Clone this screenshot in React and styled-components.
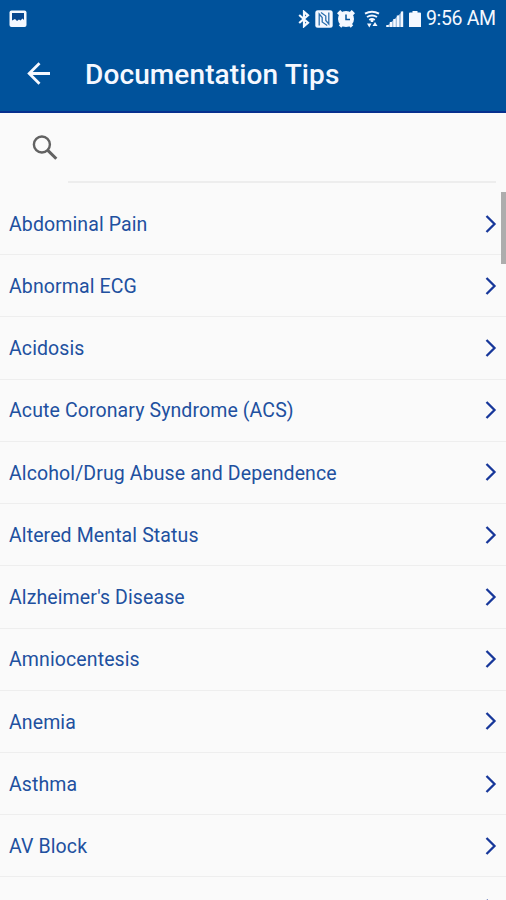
import React from "react";
import styled, { createGlobalStyle } from "styled-components";

const GlobalStyle = createGlobalStyle`
  * { box-sizing: border-box; }
  body { margin: 0; background: #fafafa; font-family: Roboto, sans-serif; }
`;

const Screen = styled.div`
  height: 900px;
  overflow: hidden;
  display: flex;
  flex-direction: column;
  background: #fafafa;
`;

const StatusBar = styled.div`
  height: 37px;
  flex: none;
  display: flex;
  align-items: center;
  justify-content: space-between;
  padding: 0 10px 0 9px;
  background: #00529b;
  color: #f4f8ff;
`;

const StatusIcons = styled.div`
  display: flex;
  align-items: center;
`;

const Icon = styled.svg`
  display: block;
  flex: none;
  width: ${(p) => p.$w}px;
  height: ${(p) => p.$h}px;
  margin-left: ${(p) => p.$gap || 0}px;
`;

const Clock = styled.span`
  margin-left: 5px;
  width: 70px;
  font-size: 19.5px;
  line-height: 38px;
  letter-spacing: -0.35px;
  white-space: nowrap;
`;

const AppBar = styled.header`
  height: 76px;
  flex: none;
  display: flex;
  align-items: center;
  padding: 0 0 1px 27px;
  background: #00529b;
  border-bottom: 2px solid #06308e;
  color: #f5f8ff;
`;

const Title = styled.h1`
  margin: 3px 0 0 34px;
  font-size: 28px;
  font-weight: 500;
  letter-spacing: 0.12px;
  line-height: 36px;
  white-space: nowrap;
`;

const SearchRow = styled.div`
  height: 70px;
  flex: none;
  display: flex;
  padding: 0 10px 0 32px;
`;

const SearchIconBox = styled.div`
  width: 36px;
  padding-top: 22px;
`;

const SearchField = styled.div`
  flex: 1;
  border-bottom: 2px solid #ededed;
`;

const ListArea = styled.div`
  flex: 1;
  position: relative;
  padding-top: 10px;
`;

const List = styled.ul`
  margin: 0;
  padding: 0;
  list-style: none;
`;

const Row = styled.li`
  height: 62.23px;
  display: flex;
  align-items: center;
  justify-content: space-between;
  padding: 0 9px;
  border-bottom: 1px solid #eeeeee;
  color: #21509f;
`;

const Label = styled.span`
  padding-top: 1.4px;
  font-size: 19.5px;
  letter-spacing: 0.11px;
  white-space: nowrap;
`;

const ScrollThumb = styled.div`
  position: absolute;
  top: 9px;
  right: 0;
  width: 5px;
  height: 72px;
  background: #adadad;
`;

const topics = [
  "Abdominal Pain",
  "Abnormal ECG",
  "Acidosis",
  "Acute Coronary Syndrome (ACS)",
  "Alcohol/Drug Abuse and Dependence",
  "Altered Mental Status",
  "Alzheimer's Disease",
  "Amniocentesis",
  "Anemia",
  "Asthma",
  "AV Block",
  "",
];

const PictureIcon = () => (
  <Icon $w={18} $h={18} viewBox="0 0 18 18">
    <rect x="0.5" y="0.5" width="17" height="16.500" rx="2" fill="#f4f8ff" />
    <path d="M3 3h12v7l-1.500-1.500-2 2-1.500-1-2 1.500-2-2L3 10.500z" fill="#06478f" />
  </Icon>
);

const BluetoothIcon = () => (
  <Icon $w={12} $h={18} viewBox="0 0 12 18">
    <path d="M1.200 5l8.800 7.700-4 3.500V1.800l4 3.500L1.200 13" fill="none" stroke="currentColor" strokeWidth="2.200" />
  </Icon>
);

const NfcIcon = () => (
  <Icon $w={18} $h={18} $gap={5} viewBox="0 0 18 18">
    <rect x="0.300" y="0.300" width="17.400" height="17.400" rx="2.500" fill="currentColor" />
    <path d="M4.200 15.500V4l3 3.500v4.500l5 3.500M13.800 2.500V14l-3-3.500V6L6 2.500" fill="none" stroke="#2b6fae" strokeWidth="1.300" />
  </Icon>
);

const AlarmIcon = () => (
  <Icon $w={18} $h={18} $gap={4} viewBox="0 0 18 18">
    <path d="M1.200 4.500l3.300-3.300M16.800 4.500l-3.300-3.300M3 16.500l2.500-2.500M15 16.500l-2.500-2.500" stroke="currentColor" strokeWidth="3.500" />
    <circle cx="9" cy="9" r="8" fill="currentColor" />
    <path d="M9 4.500V9.500h4" fill="none" stroke="#00529b" strokeWidth="1.500" />
  </Icon>
);

const WifiIcon = () => (
  <Icon $w={16} $h={18} $gap={9} viewBox="0 0 16 18">
    <path d="M1 3.700Q8-.2 15 3.700M3 7q5-3 10 0M5.300 10q2.700-1.800 5.400 0" fill="none" stroke="currentColor" strokeWidth="2" />
    <path d="M8 9v3" stroke="currentColor" strokeWidth="2.500" />
    <path d="M3 13.500h4.500l-2.200 4zM11 12l2.500 4h-5z" fill="currentColor" />
  </Icon>
);

const SignalIcon = () => (
  <Icon $w={18} $h={18} $gap={6} viewBox="0 0 18 18">
    <path d="M0 17l17-16v16z" fill="#8fb3d8" />
    <path d="M1.500 17v-2M5 17v-5M8.500 17V9M12 17V5.500M16 17V1.500" stroke="currentColor" strokeWidth="2.400" />
  </Icon>
);

const BatteryIcon = () => (
  <Icon $w={12} $h={18} $gap={5} viewBox="0 0 12 18">
    <path d="M3.500 1h5v1.500H11a1 1 0 011 1V17H0V3.500a1 1 0 011-1h2.500z" fill="currentColor" />
  </Icon>
);

const BackArrow = () => (
  <Icon $w={24} $h={24} viewBox="0 0 24 24">
    <path d="M23 11.500H2.500M12.500 1.200L2.200 11.500l10.300 10.300" fill="none" stroke="currentColor" strokeWidth="2.800" />
  </Icon>
);

const SearchIcon = () => (
  <Icon $w={26} $h={26} viewBox="0 0 26 26">
    <circle cx="9.900" cy="9.500" r="8" fill="none" stroke="#626262" strokeWidth="2.400" />
    <path d="M15.800 15.400l8.500 8.400" stroke="#626262" strokeWidth="3" />
  </Icon>
);

const Chevron = () => (
  <Icon $w={12} $h={18} viewBox="0 0 12 18">
    <path d="M1.500 1l8 8-8 8" fill="none" stroke="#17379a" strokeWidth="2.300" />
  </Icon>
);

export default function App() {
  return (
    <>
      <GlobalStyle />
      <Screen>
        <StatusBar>
          <PictureIcon />
          <StatusIcons>
            <BluetoothIcon />
            <NfcIcon />
            <AlarmIcon />
            <WifiIcon />
            <SignalIcon />
            <BatteryIcon />
            <Clock>9:56 AM</Clock>
          </StatusIcons>
        </StatusBar>
        <AppBar>
          <BackArrow />
          <Title>Documentation Tips</Title>
        </AppBar>
        <SearchRow>
          <SearchIconBox>
            <SearchIcon />
          </SearchIconBox>
          <SearchField />
        </SearchRow>
        <ListArea>
          <List>
            {topics.map((topic, i) => (
              <Row key={i}>
                <Label>{topic}</Label>
                <Chevron />
              </Row>
            ))}
          </List>
          <ScrollThumb />
        </ListArea>
      </Screen>
    </>
  );
}
